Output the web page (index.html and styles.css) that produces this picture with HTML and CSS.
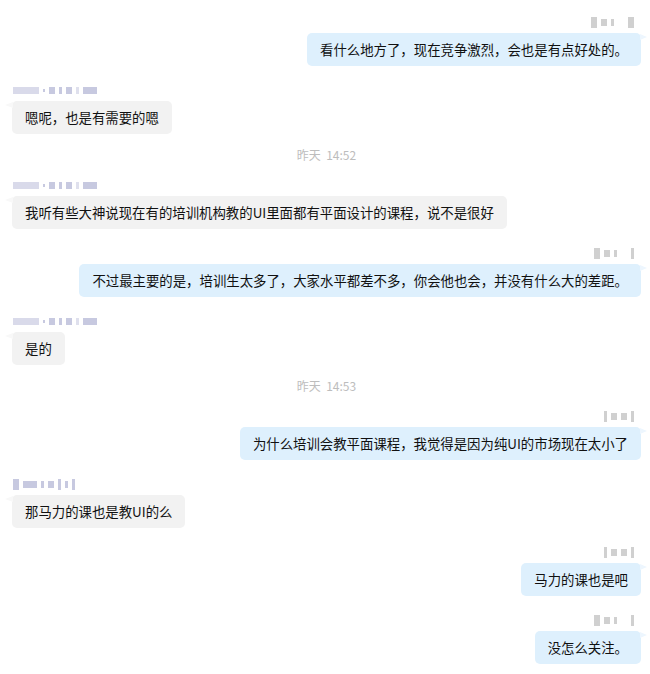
FILE: index.html
```html
<!DOCTYPE html>
<html lang="zh-CN">
<head>
<meta charset="UTF-8">
<meta name="viewport" content="width=device-width, initial-scale=1.0">
<title>聊天记录</title>
<link rel="stylesheet" href="styles.css">
</head>
<body>

<div class="chat">
    <div class="msg msg-out">
        <div class="name"><i class="m tall"></i><i class="m"></i><i class="s"></i><i class="gap"></i><i class="m tall"></i></div>
        <div class="bubble">看什么地方了，现在竞争激烈，会也是有点好处的。</div>
    </div>

    <div class="msg msg-in">
        <div class="name"><i class="xl"></i><i class="dot"></i><i class="m"></i><i class="s"></i><i class="m"></i><i class="s lt"></i><i class="l"></i></div>
        <div class="bubble">嗯呢，也是有需要的嗯</div>
    </div>

    <div class="time">昨天&nbsp;&nbsp;14:52</div>

    <div class="msg msg-in">
        <div class="name"><i class="xl"></i><i class="dot"></i><i class="m"></i><i class="s"></i><i class="m"></i><i class="s lt"></i><i class="l"></i></div>
        <div class="bubble">我听有些大神说现在有的培训机构教的UI里面都有平面设计的课程，说不是很好</div>
    </div>

    <div class="msg msg-out">
        <div class="name"><i class="m tall"></i><i class="m"></i><i class="s"></i><i class="gap"></i><i class="s tall"></i></div>
        <div class="bubble">不过最主要的是，培训生太多了，大家水平都差不多，你会他也会，并没有什么大的差距。</div>
    </div>

    <div class="msg msg-in">
        <div class="name"><i class="xl"></i><i class="dot"></i><i class="m"></i><i class="s"></i><i class="m"></i><i class="s lt"></i><i class="l"></i></div>
        <div class="bubble">是的</div>
    </div>

    <div class="time">昨天&nbsp;&nbsp;14:53</div>

    <div class="msg msg-out">
        <div class="name"><i class="s tall"></i><i class="m"></i><i class="m"></i><i class="s tall"></i></div>
        <div class="bubble">为什么培训会教平面课程，我觉得是因为纯UI的市场现在太小了</div>
    </div>

    <div class="msg msg-in">
        <div class="name"><i class="m tall"></i><i class="l"></i><i class="s"></i><i class="m"></i><i class="s tall"></i><i class="s"></i><i class="s tall"></i></div>
        <div class="bubble">那马力的课也是教UI的么</div>
    </div>

    <div class="msg msg-out">
        <div class="name"><i class="s tall"></i><i class="m"></i><i class="m"></i><i class="s tall"></i></div>
        <div class="bubble">马力的课也是吧</div>
    </div>

    <div class="msg msg-out">
        <div class="name"><i class="m tall"></i><i class="m"></i><i class="s"></i><i class="gap"></i><i class="s tall"></i></div>
        <div class="bubble">没怎么关注。</div>
    </div>
</div>

</body>
</html>
```

FILE: styles.css
```css
body {
    margin: 0;
    padding: 0;
    background-color: #fff;
    font-family: "Noto Sans CJK SC", "Noto Sans", sans-serif;
    color: #111;
}

.chat {
    display: flex;
    flex-direction: column;
    padding: 16px 9px 0 12px;
}

.msg {
    display: flex;
    flex-direction: column;
    align-items: flex-start;
    margin-bottom: 18px;
}

.msg-out {
    align-items: flex-end;
}

/* blurred nickname row */
.name {
    display: flex;
    align-items: center;
    gap: 4px;
    height: 12px;
    margin-bottom: 5px;
    padding-left: 1px;
}

.msg-out .name {
    padding-right: 7px;
}

.name i {
    display: block;
    height: 7px;
    background-color: #c4c4c4;
    opacity: 0.8;
}

.msg-in .name i {
    background-color: #b9bbd8;
}

.name .tall { height: 11px; }
.name .dot { width: 2px; height: 3px; }
.name .s { width: 3px; }
.name .m { width: 6px; }
.name .l { width: 14px; }
.name .xl { width: 26px; opacity: 0.55; }
.name .lt { opacity: 0.45; }
.name .gap { width: 6px; background: none; }

.bubble {
    position: relative;
    padding: 8px 13px;
    font-size: 13.4px;
    line-height: 17px;
    border-radius: 5px;
    white-space: nowrap;
}

.msg-in .bubble {
    background-color: #f2f2f2;
}

.msg-out .bubble {
    background-color: #def0fd;
}

.bubble::before {
    content: "";
    position: absolute;
    top: 1px;
    border-top: 3px solid transparent;
    border-bottom: 3px solid transparent;
}

.msg-in .bubble::before {
    left: -7px;
    border-right: 8px solid #f8f8f8;
}

.msg-out .bubble::before {
    right: -6px;
    border-left: 7px solid #edf6fe;
}

.time {
    margin: -4px 0 17px;
    text-align: center;
    font-size: 12px;
    line-height: 14px;
    color: #bdbdbd;
}
```
